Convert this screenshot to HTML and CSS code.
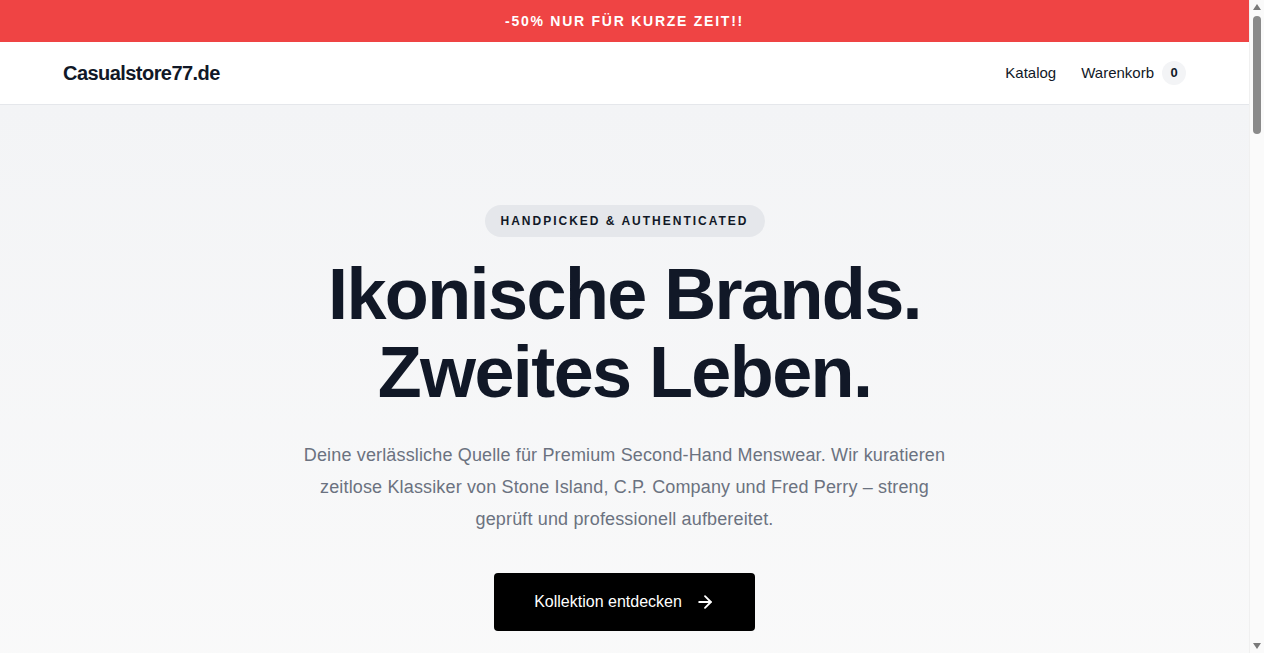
FILE: index.html
```html
<!DOCTYPE html>
<html lang="de">
<head>
<meta charset="utf-8">
<title>Casualstore77.de</title>
<link rel="stylesheet" href="styles.css">
</head>
<body>
<div class="page">
  <div class="promo">-50% NUR FÜR KURZE ZEIT!!</div>
  <header class="site-header">
    <div class="container header-inner">
      <a class="logo" href="#">Casualstore77.de</a>
      <nav class="nav">
        <a href="#">Katalog</a>
        <a href="#" class="cart">Warenkorb <span class="cart-count">0</span></a>
      </nav>
    </div>
  </header>
  <main>
    <section class="hero">
      <span class="pill">HANDPICKED &amp; AUTHENTICATED</span>
      <h1 class="hero-title">Ikonische Brands.<br>Zweites Leben.</h1>
      <p class="hero-text">Deine verlässliche Quelle für Premium Second-Hand Menswear. Wir kuratieren zeitlose Klassiker von Stone Island, C.P. Company und Fred Perry – streng geprüft und professionell aufbereitet.</p>
      <a class="btn" href="#">Kollektion entdecken
        <svg width="20" height="20" viewBox="0 0 24 24" fill="none" stroke="currentColor" stroke-width="2.2" stroke-linecap="round" stroke-linejoin="round"><path d="M5 12h14"/><path d="M12 5l7 7-7 7"/></svg>
      </a>
    </section>
    <section class="more"></section>
  </main>
</div>
<div class="scrollbar" aria-hidden="true">
  <span class="sb-up"></span>
  <span class="sb-thumb"></span>
  <span class="sb-down"></span>
</div>
</body>
</html>
```
FILE: styles.css
```css
* { box-sizing: border-box; }
html, body { margin: 0; padding: 0; }
html { scrollbar-width: none; }
body {
  font-family: "Liberation Sans", Arial, sans-serif;
  color: #111827;
  background: #fafafa;
}
.page { margin-right: 15px; }
a { color: inherit; text-decoration: none; }

.promo {
  height: 42px;
  background: #ef4444;
  color: #fff;
  font-weight: 700;
  font-size: 14px;
  letter-spacing: 1.75px;
  display: flex;
  align-items: center;
  justify-content: center;
}

.site-header {
  background: #fff;
  border-bottom: 1px solid #e5e7eb;
}
.container {
  padding: 0 63px;
}
.header-inner {
  height: 62px;
  display: flex;
  align-items: center;
  justify-content: space-between;
}
.logo {
  font-size: 20px;
  font-weight: 700;
  color: #111827;
  letter-spacing: -0.55px;
}
.nav {
  display: flex;
  align-items: center;
  gap: 25px;
  font-size: 15px;
  line-height: 20px;
  color: #111827;
}
.cart { display: flex; align-items: center; gap: 8px; }
.cart-count {
  width: 24px;
  height: 24px;
  border-radius: 50%;
  background: #f3f4f6;
  display: flex;
  align-items: center;
  justify-content: center;
  font-size: 13px;
  font-weight: 700;
}

.hero {
  background: linear-gradient(#f3f4f6, #fafafa);
  display: flex;
  flex-direction: column;
  align-items: center;
  text-align: center;
  padding: 100px 20px 120px;
}
.pill {
  display: inline-block;
  background: #e5e7eb;
  border-radius: 999px;
  padding: 9px 16px;
  font-size: 12px;
  font-weight: 700;
  letter-spacing: 2.0px;
  color: #111827;
  line-height: 14px;
}
.hero-title {
  margin: 18px 0 0;
  font-size: 72px;
  line-height: 78px;
  font-weight: 700;
  letter-spacing: -1.6px;
  color: #111827;
}
.hero-text {
  margin: 28px 0 0;
  max-width: 660px;
  font-size: 18px;
  line-height: 32px;
  letter-spacing: 0.15px;
  color: #6b7280;
}
.btn {
  margin-top: 38px;
  display: inline-flex;
  align-items: center;
  gap: 13px;
  background: #000;
  color: #fff;
  font-size: 16px;
  height: 58px;
  padding: 0 40px;
  border-radius: 4px;
}
.more { height: 3200px; background: #fafafa; }

.scrollbar {
  position: fixed;
  top: 0;
  right: 0;
  width: 15px;
  height: 100vh;
  background: #fafafa;
  border-left: 1px solid #f0f0f0;
}
.sb-up, .sb-down {
  position: absolute;
  left: 3px;
  width: 0;
  height: 0;
  border-left: 4.5px solid transparent;
  border-right: 4.5px solid transparent;
}
.sb-up { top: 4px; border-bottom: 6px solid #7a7a7a; }
.sb-down { bottom: 4px; border-top: 6px solid #7a7a7a; }
.sb-thumb {
  position: absolute;
  left: 3px;
  top: 16px;
  width: 8px;
  height: 118px;
  border-radius: 4px;
  background: #8a8a8a;
}
```
